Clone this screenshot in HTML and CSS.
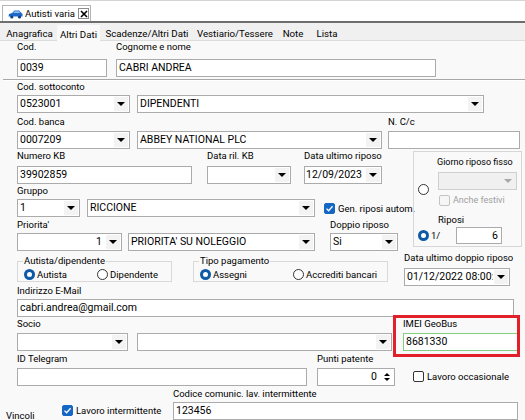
FILE: index.html
```html
<!DOCTYPE html>
<html>
<head>
<meta charset="utf-8">
<link rel="stylesheet" href="styles.css">
</head>
<body>
<div class="doctabs">
  <div class="doctab">
    <svg class="caricon" width="15" height="10" viewBox="0 0 15 10">
      <path d="M0.5 7.5 L1 5 L4 4 L6.5 1.5 L11 1.5 L13.5 4 L14.5 5 L14.5 7.5 Z" fill="#1d68c8"/>
      <path d="M6.8 2.3 L10.6 2.3 L12.3 4 L5.2 4 Z" fill="#8fc0f0"/>
      <circle cx="3.8" cy="8" r="1.6" fill="#0d3e80"/>
      <circle cx="11.5" cy="8" r="1.6" fill="#0d3e80"/>
    </svg>
    <span class="doctitle">Autisti varia</span>
    <span class="close"><svg width="8" height="8" viewBox="0 0 8 8"><path d="M1 1 L7 7 M7 1 L1 7" stroke="#000" stroke-width="1.6"/></svg></span>
  </div>
</div>
<div class="tabs">
  <span class="tab t1">Anagrafica</span>
  <span class="tab t2 sel">Altri Dati</span>
  <span class="tab t3">Scadenze/Altri Dati</span>
  <span class="tab t4">Vestiario/Tessere</span>
  <span class="tab t5">Note</span>
  <span class="tab t6">Lista</span>
</div>
<div class="page">
  <div class="row row-a">
    <div class="f f-cod"><div class="lab">Cod.</div><div class="tb">0039</div></div>
    <div class="f f-nome"><div class="lab">Cognome e nome</div><div class="tb">CABRI ANDREA</div></div>
  </div>
  <div class="sep"></div>
  <div class="row row-b">
    <div class="f f-sotto"><div class="lab">Cod. sottoconto</div><div class="cb"><span class="v">0523001</span><span class="ar"></span></div></div>
    <div class="f f-dip"><div class="lab"></div><div class="cb"><span class="v">DIPENDENTI</span><span class="ar"></span></div></div>
  </div>
  <div class="row row-c">
    <div class="f f-banca"><div class="lab">Cod. banca</div><div class="cb"><span class="v">0007209</span><span class="ar"></span></div></div>
    <div class="f f-abbey"><div class="lab"></div><div class="cb"><span class="v">ABBEY NATIONAL PLC</span><span class="ar"></span></div></div>
    <div class="f f-ncc"><div class="lab">N. C/c</div><div class="tb"></div></div>
  </div>
  <div class="blk">
    <div class="blk-left">
      <div class="row row-d">
        <div class="f f-kb"><div class="lab">Numero KB</div><div class="tb">39902859</div></div>
        <div class="f f-dril"><div class="lab">Data ril. KB</div><div class="cb"><span class="v"></span><span class="ar"></span></div></div>
        <div class="f f-dur"><div class="lab">Data ultimo riposo</div><div class="cb"><span class="v">12/09/2023</span><span class="ar"></span></div></div>
      </div>
      <div class="row row-e">
        <div class="f f-gr"><div class="lab">Gruppo</div><div class="cb"><span class="v">1</span><span class="ar"></span></div></div>
        <div class="f f-ric"><div class="lab"></div><div class="cb"><span class="v">RICCIONE</span><span class="ar"></span></div></div>
        <label class="chkitem ci-gen"><span class="ck on"><svg width="9" height="9" viewBox="0 0 9 9"><path d="M1.5 4.6 L3.6 6.7 L7.6 2.3" fill="none" stroke="#fff" stroke-width="1.3"/></svg></span>Gen. riposi autom.</label>
      </div>
      <div class="row row-f">
        <div class="f f-pri"><div class="lab">Priorita'</div><div class="cb"><span class="v right">1</span><span class="ar"></span></div></div>
        <div class="f f-prin"><div class="lab"></div><div class="cb"><span class="v">PRIORITA' SU NOLEGGIO</span><span class="ar"></span></div></div>
        <div class="f f-dop"><div class="lab">Doppio riposo</div><div class="cb"><span class="v">Si</span><span class="ar"></span></div></div>
      </div>
    </div>
    <div class="panel">
      <div class="p-title">Giorno riposo fisso</div>
      <div class="p-row1">
        <span class="rb"></span>
        <div class="p-col">
          <div class="cb dis"><span class="v"></span><span class="ar"></span></div>
          <label class="chkitem ci-fest"><span class="ck dis"></span>Anche festivi</label>
        </div>
      </div>
      <div class="p-riposi">Riposi</div>
      <div class="p-row2">
        <span class="rb on"></span>
        <span class="onebar">1/</span>
        <div class="tb num">6</div>
      </div>
    </div>
  </div>
  <div class="row row-g">
    <fieldset class="gb gb1">
      <legend>Autista/dipendente</legend>
      <label class="opt o1"><span class="rb on"></span>Autista</label>
      <label class="opt"><span class="rb"></span>Dipendente</label>
    </fieldset>
    <fieldset class="gb gb2">
      <legend>Tipo pagamento</legend>
      <label class="opt o2"><span class="rb on"></span>Assegni</label>
      <label class="opt"><span class="rb"></span>Accrediti bancari</label>
    </fieldset>
    <div class="f f-dudr"><div class="lab">Data ultimo doppio riposo</div><div class="cb"><span class="v">01/12/2022 08:00:00</span><span class="ar"></span></div></div>
  </div>
  <div class="row row-h">
    <div class="f f-mail"><div class="lab">Indirizzo E-Mail</div><div class="tb">cabri.andrea@gmail.com</div></div>
  </div>
  <div class="row row-i">
    <div class="f f-socio"><div class="lab">Socio</div><div class="cb"><span class="v"></span><span class="ar"></span></div></div>
    <div class="f f-socio2"><div class="lab"></div><div class="cb"><span class="v"></span><span class="ar"></span></div></div>
    <div class="f f-imei">
      <div class="lab">IMEI GeoBus</div>
      <div class="tb green">8681330</div>
      <div class="hilite"></div>
    </div>
  </div>
  <div class="row row-j">
    <div class="f f-tg"><div class="lab">ID Telegram</div><div class="tb"></div></div>
    <div class="f f-punti"><div class="lab">Punti patente</div><div class="tb spin"><span class="v right">0</span><span class="sp"><span class="up"></span><span class="dn"></span></span></div></div>
    <label class="chkitem ci-occ"><span class="ck"></span>Lavoro occasionale</label>
  </div>
  <div class="row row-k">
    <div class="vinc">Vincoli</div>
    <label class="chkitem ci-int"><span class="ck on"><svg width="9" height="9" viewBox="0 0 9 9"><path d="M1.5 4.6 L3.6 6.7 L7.6 2.3" fill="none" stroke="#fff" stroke-width="1.3"/></svg></span>Lavoro intermittente</label>
    <div class="f f-cod2"><div class="lab">Codice comunic. lav. intermittente</div><div class="tb">123456</div></div>
  </div>
</div>
</body>
</html>
```

FILE: styles.css
```css
* { box-sizing: border-box; }
html, body { margin: 0; padding: 0; width: 525px; height: 420px; overflow: hidden; }
body {
  background: #f9f9f9;
  font-family: Roboto, "Liberation Sans", sans-serif;
  font-size: 9.5px;
  color: #000;
}

/* document tab bar */
.doctabs {
  height: 23px;
  background: #fff;
  border-top: 1px solid #d4d4d4;
  border-bottom: 2px solid #6e6e6e;
  padding-left: 2px;
  display: flex;
  align-items: flex-end;
}
.doctab {
  width: 89px;
  height: 16px;
  border: 1px solid #b4b4b4;
  border-bottom: none;
  background: #fff;
  display: flex;
  align-items: center;
  padding-left: 5px;
}
.caricon { display: block; flex: none; }
.doctitle { margin-left: 2px; font-size: 9.5px; white-space: nowrap; }
.close {
  margin-left: auto;
  margin-right: 1px;
  width: 11px;
  height: 11px;
  border: 1px solid #8c8c8c;
  display: flex;
  align-items: center;
  justify-content: center;
  background: #fff;
}
.close svg { display: block; }

/* page tabs */
.tabs {
  height: 18px;
  background: #f0f0f0;
  border-bottom: 1px solid #dcdcdc;
  display: flex;
  align-items: flex-end;
  padding-left: 2px;
}
.tab {
  height: 17px;
  padding-top: 5px;
  line-height: 12px;
  font-size: 9.7px;
  white-space: nowrap;
  text-align: center;
}
.tab.sel { background: #fafafa; height: 16px; padding-top: 4px; margin-bottom: -1px; }
.t1 { width: 55px; }
.t2 { width: 43px; }
.t3 { width: 94px; }
.t4 { width: 82px; }
.t5 { width: 34px; }
.t6 { width: 34px; }

/* page */
.page { padding-left: 17px; }
.row { display: flex; align-items: flex-start; }
.f { display: flex; flex-direction: column; flex: none; position: relative; }
.lab { height: 12px; line-height: 12px; margin-bottom: 2px; white-space: nowrap; }

.tb, .cb {
  height: 18px;
  background: #fff;
  border: 1px solid #ababab;
  font-size: 10.5px;
  line-height: 16px;
  white-space: nowrap;
  overflow: hidden;
}
.tb { padding-left: 2px; }
.cb { display: flex; }
.cb .v, .tb .v { flex: 1; padding-left: 2px; overflow: hidden; }
.v.right { text-align: right; padding-right: 3px; }
.ar {
  width: 14px;
  flex: none;
  margin: 1px;
  background: #f3f3f3;
  display: flex;
  align-items: center;
  justify-content: center;
}
.ar::before {
  content: "";
  border-left: 4px solid transparent;
  border-right: 4px solid transparent;
  border-top: 4px solid #000;
}
.cb.dis { background: #f0f0f0; border-color: #cfcfcf; }
.cb.dis .ar { background: transparent; }
.cb.dis .ar::before { border-top-color: #a8a8a8; }

.sep {
  margin: 2px 0 0 -14px;
  height: 2px;
  border-top: 1px solid #a8a8a8;
  border-bottom: 1px solid #fff;
}

/* checkbox / radio */
.ck {
  width: 11px;
  height: 11px;
  border: 1px solid #333;
  border-radius: 2px;
  background: #fff;
  flex: none;
  display: flex;
  align-items: center;
  justify-content: center;
}
.ck.on { background: #1667c4; border-color: #1667c4; }
.ck svg { display: block; }
.ck.dis { border-color: #c4c4c4; background: #f6f6f6; }
.rb {
  width: 11px;
  height: 11px;
  border-radius: 50%;
  border: 1px solid #333;
  background: #fff;
  flex: none;
}
.rb.on { border: 3.5px solid #0d5aa7; }
.chkitem { display: flex; align-items: center; white-space: nowrap; flex: none; }
.chkitem .ck { margin-right: 3px; }
.opt { display: flex; align-items: center; height: 12px; white-space: nowrap; flex: none; }
.opt .rb { margin-right: 2px; }

/* row A */
.row-a .lab { margin-bottom: 6px; }
.f-cod { width: 90px; }
.f-nome { width: 320px; margin-left: 9px; }

/* row B */
.f-sotto { width: 113px; }
.f-dip { width: 347px; margin-left: 7px; }

/* row C */
.row-c { margin-top: 3px; }
.row-c .lab { margin-bottom: 3px; }
.f-banca { width: 113px; }
.f-abbey { width: 245px; margin-left: 7px; }
.f-ncc { width: 132px; margin-left: 6px; }

/* block D-F */
.blk { display: flex; align-items: flex-start; }
.blk-left { width: 396px; flex: none; }
.row-d { margin-top: 1px; }
.row-d .lab { margin-bottom: 4px; }
.f-kb { width: 175px; }
.f-dril { width: 84px; margin-left: 15px; }
.f-dur { width: 78px; margin-left: 13px; }
.f-dur .v { padding-left: 1px; }
.row-e { margin-top: 1px; }
.f-gr { width: 63px; }
.f-ric { width: 228px; margin-left: 7px; }
.ci-gen { margin-left: 9px; margin-top: 14px; height: 18px; }
.row-f { margin-top: 2px; }
.f-pri { width: 105px; }
.f-prin { width: 187px; margin-left: 6px; }
.f-dop { width: 68px; margin-left: 15px; }

.panel {
  width: 109px;
  height: 96px;
  margin-top: 2px;
  border: 1px solid #d7d7d7;
  flex: none;
  padding-top: 4px;
}
.p-title { margin-left: 23px; height: 12px; line-height: 12px; font-size: 9px; white-space: nowrap; }
.p-row1 { display: flex; align-items: center; margin-top: 4px; padding-left: 4px; }
.p-col { margin-left: 9px; }
.p-col .cb { width: 79px; }
.ci-fest { height: 12px; margin-top: 4px; margin-left: 1px; color: #a0a0a0; font-size: 9px; }
.p-riposi { margin-left: 24px; margin-top: 8px; height: 12px; line-height: 12px; }
.p-row2 { display: flex; align-items: center; padding-left: 4px; margin-top: 1px; }
.onebar { margin-left: 2px; width: 25px; flex: none; }
.tb.num { width: 46px; height: 17px; text-align: right; padding-right: 3px; }

/* row G */
.gb {
  margin: 4px 0 0 0;
  padding: 1px 5px 1px 5px;
  border: 1px solid #d9d9d9;
  min-inline-size: 0;
  display: flex;
  align-items: center;
}
.gb legend { padding: 0 1px; height: 12px; line-height: 12px; white-space: nowrap; }
.gb1 { width: 155px; }
.gb2 { width: 195px; margin-left: 21px; }
.o1 { margin-left: 1px; width: 73px; }
.o2 { margin-left: 1px; width: 93px; }
.f-dudr { width: 106px; margin-left: 16px; margin-top: 1px; }
.f-dudr .lab { margin-bottom: 4px; }

/* row H */
.row-h { margin-top: -1px; }
.f-mail { width: 497px; }

/* row I */
.row-i { margin-top: 1px; }
.row-i .lab { margin-bottom: 3px; }
.f-socio { width: 111px; }
.f-socio2 { width: 255px; margin-left: 9px; }
.f-imei { width: 115px; margin-left: 11px; }
.tb.green { border-color: #7fd07f; }
.hilite {
  position: absolute;
  left: -10px;
  top: -3px;
  width: 127px;
  height: 42px;
  border: 3px solid #e2202a;
}

/* row J */
.row-j { margin-top: 2px; }
.row-j .lab { margin-bottom: 3px; }
.f-tg { width: 290px; }
.f-punti { width: 78px; margin-left: 10px; }
.tb.spin { display: flex; padding-left: 0; }
.sp { width: 14px; display: flex; flex-direction: column; align-items: center; justify-content: center; gap: 2px; }
.sp .up { border-left: 3px solid transparent; border-right: 3px solid transparent; border-bottom: 3px solid #000; }
.sp .dn { border-left: 3px solid transparent; border-right: 3px solid transparent; border-top: 3px solid #000; }
.ci-occ { margin-left: 18px; margin-top: 14px; height: 18px; }

/* row K */
.row-k { margin-top: 2px; }
.vinc { margin-left: -11px; width: 56px; padding-top: 22px; line-height: 12px; flex: none; }
.ci-int { width: 111px; margin-top: 16px; height: 12px; }
.f-cod2 { width: 345px; }
```
